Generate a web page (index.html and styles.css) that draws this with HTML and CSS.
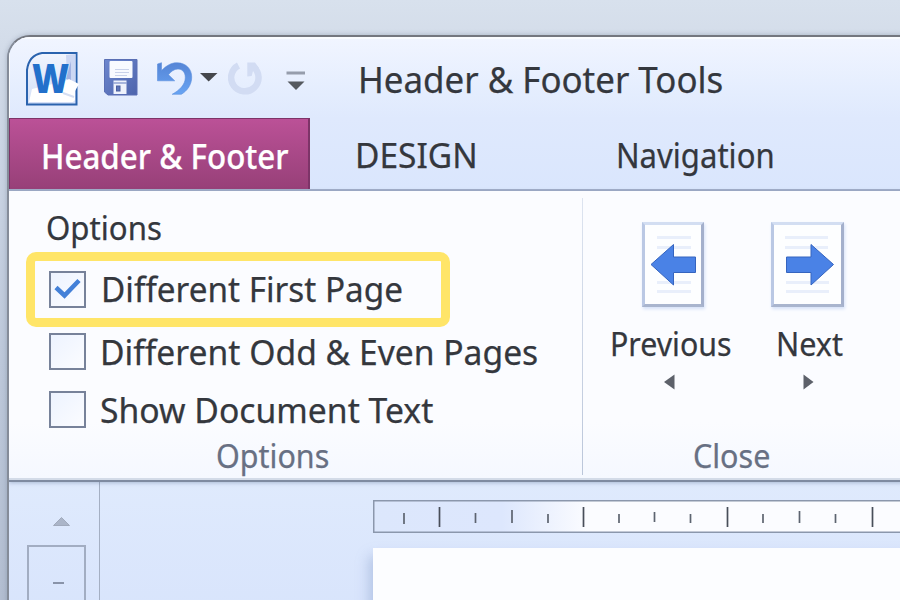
FILE: index.html
```html
<!DOCTYPE html>
<html lang="en">
<head>
  <meta charset="UTF-8">
  <meta name="viewport" content="width=device-width, initial-scale=1.0">
  <title>Header &amp; Footer Tools</title>
  <link rel="stylesheet" href="styles.css">
</head>
<body>
  <div class="window">
    <header class="titlebar">
      <svg class="word" width="54" height="56" viewBox="0 0 54 56">
        <defs>
          <linearGradient id="wordBg" x1="0" y1="0" x2="0" y2="1">
            <stop offset="0" stop-color="#f1f5fe"/>
            <stop offset="1" stop-color="#d3dff7"/>
          </linearGradient>
        </defs>
        <path d="M17 2H51.500V53.500H2V19Q4 4 17 2Z" fill="url(#wordBg)" stroke="#2a63ae" stroke-width="2"/>
        <path d="M41 4L50.500 3V34L42 28Z" fill="#ccd7f3"/>
        <path d="M46 10V30L41 28Z" fill="#a3b3e2"/>
        <path d="M7 38L40 30L44 28L54 33L50 40V49L48 51H4Z" fill="#fff"/>
        <path d="M38 42L49 46" stroke="#d5def2" stroke-width="2"/>
      </svg>
      <b class="word-letter">W</b>

      <svg class="save" width="34" height="38" viewBox="0 0 34 38">
        <defs>
          <linearGradient id="disk" x1="0" y1="0" x2="1" y2="1">
            <stop offset="0" stop-color="#6d87cf"/>
            <stop offset="1" stop-color="#4d64ac"/>
          </linearGradient>
        </defs>
        <path d="M0.500 0.500H33V36H4L0.500 33Z" fill="url(#disk)" stroke="#5a6fb4"/>
        <rect x="5.500" y="2" width="23" height="17" rx="1" fill="#f8faff"/>
        <path d="M11 10.500H25M11 13.500H25M11 16.500H23" stroke="#c9d2ea" stroke-width="1"/>
        <path d="M9.500 21.500H22.500V35H9.500Z" fill="#eef2fc"/>
        <path d="M9.500 24H22.500" stroke="#6078bd" stroke-width="1"/>
        <rect x="12.500" y="27" width="3.500" height="5" fill="#5d74b9" stroke="#4a5e9d"/>
      </svg>

      <svg class="undo" width="36" height="34" viewBox="0 0 36 34">
        <defs>
          <linearGradient id="undoFill" x1="0" y1="0" x2="0" y2="1">
            <stop offset="0" stop-color="#5585d6"/>
            <stop offset="1" stop-color="#68a4f3"/>
          </linearGradient>
        </defs>
        <path d="M0.500 2L4.500 0.700V8.500C10 3 15 0.500 20.500 0.800C29 1 34.700 7 34.700 15C34.700 23 30 29 24.300 32.300H15.200C22 28.500 28.300 23 28.300 15.500C28.300 10 25 7 21 7C17 7 14 9.500 11.500 12.700L17.700 18.800H0.500Z" fill="url(#undoFill)" stroke="#5b8fde" stroke-width=".6"/>
      </svg>

      <svg class="undo-more" width="18" height="9" viewBox="0 0 18 9">
        <path d="M0 0H17.500L8.700 8.500Z" fill="#45474c"/>
      </svg>

      <svg class="redo" width="36" height="34" viewBox="0 0 36 34">
        <path d="M10.500 3.500A13.700 13.700 0 1 0 25.500 5" fill="none" stroke="#d2dcf3" stroke-width="6.500"/>
        <path d="M19.300 0.500H27L31 6L25 9L23.700 14L19.300 14.500Z" fill="#d2dcf3"/>
      </svg>

      <svg class="customize" width="20" height="20" viewBox="0 0 20 20">
        <path d="M0.500 2H19" stroke="#969dac" stroke-width="3"/>
        <path d="M1.500 10.500H18.500L10 19Z" fill="#55595f"/>
      </svg>

      <h1 class="title"><span class="t-title">Header &amp; Footer Tools</span></h1>
    </header>

    <nav class="tabs">
      <a class="tab active"><span class="t-tab">Header &amp; Footer</span></a>
      <a class="tab design"><span class="t-design">DESIGN</span></a>
      <a class="tab navigation"><span class="t-navigation">Navigation</span></a>
    </nav>

    <main class="ribbon">
      <section class="group options">
        <h2><span class="t-options">Options</span></h2>
        <div class="option highlight">
          <i class="check"><svg width="27" height="22" viewBox="0 0 27 22"><path d="M2 9.500L10.500 17.500L25 2.500" fill="none" stroke="#4380d8" stroke-width="4.500"/></svg></i>
          <span class="t-first">Different First Page</span>
        </div>
        <div class="option odd">
          <i class="check"></i>
          <span class="t-odd">Different Odd &amp; Even Pages</span>
        </div>
        <div class="option show">
          <i class="check"></i>
          <span class="t-show">Show Document Text</span>
        </div>
        <p class="group-name"><span class="t-name">Options</span></p>
      </section>

      <section class="group close">
        <div class="buttons">
          <div class="button previous">
            <div class="page-icon">
              <svg width="56" height="79" viewBox="0 0 56 79">
                <path d="M12 12.500H46M12 22.500H46M12 57.500H46M12 66.500H46" stroke="#e9effb" stroke-width="3"/>
                <path d="M6 39.500L28.500 19.500V32H50.500V47.500H28.500V60Z" fill="#4a82e6" stroke="#3564bf"/>
              </svg>
            </div>
            <span class="t-previous">Previous</span>
            <svg class="small-arrow" width="11" height="16" viewBox="0 0 11 16"><path d="M10.500 0.500V15.500L0 8Z" fill="#5d616a"/></svg>
          </div>
          <div class="button next">
            <div class="page-icon">
              <svg width="67" height="79" viewBox="0 0 67 79">
                <path d="M11 12.500H54M11 22.500H54M12 57.500H55M12 66.500H55" stroke="#e9effb" stroke-width="3"/>
                <path d="M59.500 39.500L37 19.500V32H12.500V47.500H37V60Z" fill="#4a82e6" stroke="#3564bf"/>
              </svg>
            </div>
            <span class="t-next">Next</span>
            <svg class="small-arrow" width="11" height="16" viewBox="0 0 11 16"><path d="M0.500 0.500V15.500L10.500 8Z" fill="#5d616a"/></svg>
          </div>
        </div>
        <p class="group-name"><span class="t-close">Close</span></p>
      </section>
    </main>

    <div class="workspace">
      <aside class="side">
        <svg class="scroll-up" width="17" height="9" viewBox="0 0 17 9"><path d="M0.500 8.500L8.500 0.500L16.500 8.500Z" fill="#abb5c8" stroke="#98a1b2" stroke-width=".8"/></svg>
        <div class="thumb"><i></i></div>
      </aside>
      <div class="document">
        <svg class="ruler" width="540" height="33" viewBox="0 0 540 33">
          <defs>
            <linearGradient id="rulerBg" gradientUnits="userSpaceOnUse" x1="0" y1="0" x2="215" y2="0">
              <stop offset="0" stop-color="#dce7fc"/>
              <stop offset=".6" stop-color="#dde7fd"/>
              <stop offset="1" stop-color="#fbfcff"/>
            </linearGradient>
          </defs>
          <rect x=".75" y=".75" width="560" height="31.500" fill="url(#rulerBg)" stroke="#8b97ac" stroke-width="1.500"/>
          <path d="M66.500 7V27M210.500 7V27M354.500 7V27M499.500 7V27" stroke="#484e59" stroke-width="1.700"/>
          <path d="M31 13V24M102.500 13V23M139 10V23M175 14V23M246 14V23M281.500 12V22M317.500 14V23M390 14V23M426.500 11V23M462.500 14V23" stroke="#5d6470" stroke-width="1.700"/>
        </svg>
        <div class="page"></div>
      </div>
    </div>
  </div>
</body>
</html>
```

FILE: styles.css
```css
* {
  margin: 0;
  padding: 0;
  box-sizing: border-box;
}

body {
  width: 900px;
  height: 600px;
  overflow: hidden;
  padding: 35px 0 0 7px;
  background: linear-gradient(#d8e1ed, #d0d9e7 12%, #bdc8da 60%, #b3bed1);
  font-family: "Noto Sans", "Open Sans", sans-serif;
  color: #34373d;
}

h1, h2 {
  font-weight: 400;
}

svg {
  display: block;
  flex: none;
}

.window {
  width: 920px;
  height: 580px;
  border: 2px solid #74777f;
  border-left-color: #858c99;
  border-radius: 23px 0 0 0;
  overflow: hidden;
  background: #dce8fd;
  box-shadow: 0 0 5px rgba(80, 95, 120, 0.35);
}

/* Labels are narrowed from the left edge */
span {
  display: block;
  white-space: nowrap;
  transform-origin: 0 50%;
  -webkit-text-stroke: 0.25px currentColor;
}

.t-title { transform: scaleX(0.969); }
.t-tab { transform: scaleX(0.922); }
.t-design { transform: scaleX(0.985); }
.t-navigation { transform: scaleX(0.914); }
.t-options { transform: scaleX(0.974); }
.t-first { transform: scaleX(0.951); }
.t-odd { transform: scaleX(0.961); }
.t-show { transform: scaleX(0.963); }
.t-name { transform: scaleX(0.952); }
.t-previous { transform: scaleX(0.947); }
.t-next { transform: scaleX(0.955); }
.t-close { transform: scaleX(0.952); }

/* Title bar */
.titlebar {
  display: flex;
  align-items: flex-start;
  height: 81px;
  padding-left: 16px;
  background: linear-gradient(#f1f5ff, #e4edfe 70%, #dfe9fd);
  box-shadow: inset 1px 2px 0 #fafcff;
}

.word {
  margin-top: 14px;
}

.word-letter {
  width: 38px;
  margin: 10px 0 0 -47px;
  font: 800 41px/60px "Open Sans", sans-serif;
  color: #2270cb;
  transform: scaleX(0.87);
  transform-origin: 0 50%;
}

.save {
  margin: 22px 0 0 34px;
}

.undo {
  margin: 25px 0 0 19px;
}

.undo-more {
  margin: 36px 0 0 7px;
}

.redo {
  margin: 25px 0 0 10px;
}

.customize {
  margin: 34px 0 0 22px;
}

.title {
  margin-left: 52px;
  font-size: 36px;
  line-height: 86px;
}

/* Tabs */
.tabs {
  display: flex;
  height: 73px;
  background: linear-gradient(#dfe9fd, #dae6fd);
  border-bottom: 2px solid #a2aec8;
}

.tab {
  height: 71px;
  font-size: 34px;
  line-height: 75px;
}

.active {
  width: 301px;
  padding-left: 31px;
  background: linear-gradient(#bb5197, #974078);
  border: 1px solid #7d3468;
  border-width: 1px 2px 0 1px;
  color: #fff;
  font-weight: 500;
}

.design {
  width: 260px;
  padding-left: 45px;
}

.navigation {
  padding-left: 46px;
}

/* Ribbon */
.ribbon {
  display: flex;
  height: 291px;
  background: linear-gradient(#fbfcff 80%, #f5f8ff);
  border-bottom: 2px solid #7f8ba1;
  box-shadow: inset 0 -2px 0 #d3dbe8, 0 1px 4px rgba(90, 110, 150, 0.4);
  position: relative;
}

.group {
  flex: none;
}

.options {
  width: 574px;
  padding-top: 12px;
  background: linear-gradient(#dde4f0, #bbc6da) no-repeat right 7px / 1px 277px;
}

h2 {
  height: 49px;
  padding-left: 37px;
  font-size: 32px;
  line-height: 50px;
}

.option {
  display: flex;
  align-items: center;
  padding-left: 40px;
  font-size: 35px;
}

.option span {
  margin-left: 14px;
  padding-top: 2px;
  line-height: 46px;
}

.check {
  display: flex;
  align-items: center;
  justify-content: center;
  flex: none;
  width: 37px;
  height: 37px;
  border: 2px solid #77829a;
  background: linear-gradient(135deg, #edf3ff, #fbfcff);
}

.highlight {
  width: 424px;
  height: 75px;
  margin-left: 17px;
  padding: 0 0 1px 14px;
  border: 9px solid #ffe568;
  border-radius: 10px;
}

.highlight span {
  margin-left: 15px;
  padding-top: 0;
}

.odd {
  height: 48px;
}

.show {
  height: 68px;
}

.group-name {
  height: 24px;
  padding-left: 207px;
  font-size: 32px;
  line-height: 26px;
  color: #687083;
}

.close {
  padding-top: 31px;
}

.close .group-name {
  padding-left: 110px;
}

.buttons {
  display: flex;
  height: 221px;
  padding-left: 27px;
}

.button {
  width: 166px;
  font-size: 32px;
  line-height: 48px;
}

.page-icon {
  width: 62px;
  height: 85px;
  margin: 0 0 13px 32px;
  border: 3px solid #a9b4ce;
  border-color: #d3def2 #a4b0cc #a9b5ce #bac8e4;
  background: #fdfeff;
  box-shadow: 1px 2px 3px #d5e1f8;
}

.next .page-icon {
  width: 73px;
  margin-left: -5px;
}

.small-arrow {
  margin: 6px 0 0 54px;
}

.next .small-arrow {
  margin-left: 27px;
}

/* Document area */
.workspace {
  display: flex;
  height: 133px;
  background: linear-gradient(#dfeafd, #d8e4fc);
}

.side {
  width: 91px;
  padding: 35px 0 0 18px;
  border-right: 1px solid #a4afc3;
}

.scroll-up {
  margin-left: 26px;
}

.thumb {
  width: 59px;
  height: 90px;
  margin-top: 19px;
  padding: 35px 0 0 24px;
  border: 2px solid #a2adc2;
}

.thumb i {
  display: block;
  width: 11px;
  height: 2px;
  background: #8993a9;
}

.document {
  padding: 18px 0 0 273px;
}

.page {
  width: 540px;
  height: 80px;
  margin-top: 15px;
  background: #fcfdff;
  box-shadow: -4px 8px 12px rgba(120, 145, 195, 0.4);
}
```
